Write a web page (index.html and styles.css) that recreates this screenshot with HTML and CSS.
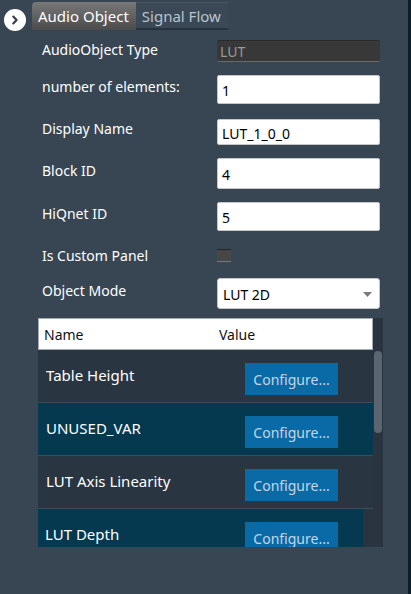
FILE: index.html
```html
<!DOCTYPE html>
<html lang="en">
<head>
    <meta charset="UTF-8">
    <meta name="viewport" content="width=device-width, initial-scale=1.0">
    <title>Audio Object Properties</title>
    <link rel="stylesheet" href="styles.css">
</head>
<body>
    <div class="panel">
        <div class="tab-bar">
            <button class="expand-btn" title="Expand">
                <svg width="22" height="22" viewBox="0 0 22 22">
                    <circle cx="11" cy="11" r="11" fill="#ffffff"/>
                    <path d="M9.3 7.6 L12.6 11 L9.3 14.4" fill="none" stroke="#3a3f45" stroke-width="2.2" stroke-linecap="round" stroke-linejoin="round"/>
                </svg>
            </button>
            <div class="tab active">Audio Object</div>
            <div class="tab">Signal Flow</div>
        </div>

        <div class="form">
            <div class="field first">
                <label>AudioObject Type</label>
                <input class="input readonly h22" type="text" value="LUT" readonly>
            </div>
            <div class="field">
                <label>number of elements:</label>
                <input class="input h29" type="text" value="1">
            </div>
            <div class="field wide-gap">
                <label>Display Name</label>
                <input class="input h26" type="text" value="LUT_1_0_0">
            </div>
            <div class="field">
                <label>Block ID</label>
                <input class="input h31" type="text" value="4">
            </div>
            <div class="field">
                <label>HiQnet ID</label>
                <input class="input h29" type="text" value="5">
            </div>
            <div class="field check-row">
                <label>Is Custom Panel</label>
                <span class="checkbox"></span>
            </div>
            <div class="field tight">
                <label>Object Mode</label>
                <div class="select">
                    <span>LUT 2D</span>
                    <svg width="9" height="5" viewBox="0 0 9 5"><path d="M0 0 H9 L4.5 5 Z" fill="#7a7a7a"/></svg>
                </div>
            </div>
        </div>

        <div class="grid">
            <div class="grid-body">
                <div class="grid-header">
                    <span class="col-name">Name</span>
                    <span class="col-value">Value</span>
                </div>
                <div class="grid-row">
                    <span class="col-name">Table Height</span>
                    <span class="col-value"><button class="configure">Configure...</button></span>
                </div>
                <div class="grid-row alt">
                    <span class="col-name">UNUSED_VAR</span>
                    <span class="col-value"><button class="configure">Configure...</button></span>
                </div>
                <div class="grid-row">
                    <span class="col-name">LUT Axis Linearity</span>
                    <span class="col-value"><button class="configure">Configure...</button></span>
                </div>
                <div class="grid-row alt last">
                    <span class="col-name">LUT Depth</span>
                    <span class="col-value"><button class="configure">Configure...</button></span>
                </div>
            </div>
            <div class="scrollbar">
                <div class="thumb"></div>
            </div>
        </div>
    </div>
</body>
</html>
```

FILE: styles.css
```css
html, body {
    margin: 0;
    height: 100%;
}
body {
    font-family: "Noto Sans", "Open Sans", sans-serif;
    font-size: 14px;
    background-color: #384654;
    color: #ffffff;
    overflow: hidden;
}
.panel {
    height: 100%;
    border-right: 3px solid #0b1e2b;
    box-sizing: border-box;
    width: 411px;
}

/* tabs */
.tab-bar {
    display: flex;
    align-items: flex-end;
    height: 30px;
    padding-top: 2px;
    box-sizing: border-box;
}
.expand-btn {
    border: none;
    background: none;
    padding: 0;
    margin: 0 6px 0 4px;
    width: 22px;
    height: 22px;
    position: relative;
    top: 1px;
    display: flex;
}
.tab {
    height: 28px;
    line-height: 27px;
    padding: 0 7px 0 6px;
    font-size: 15px;
    color: #b9c3cd;
    background-color: #3b4957;
    border-top: 1px solid #4a5866;
    border-bottom: 2px solid #263240;
    box-sizing: border-box;
}
.tab.active {
    color: #ffffff;
    background: linear-gradient(#787878, #4b4b4b);
    border-radius: 4px 0 0 0;
    border: none;
    line-height: 28px;
}

/* form */
.form {
    padding-left: 42px;
}
.field {
    display: flex;
    align-items: center;
    margin-top: 13px;
}
.field.first {
    margin-top: 10px;
}
.field.wide-gap {
    margin-top: 15px;
}
.field.tight {
    margin-top: 9px;
}
.field label {
    width: 175px;
    padding-bottom: 7px;
    font-size: 14px;
    color: #ffffff;
}
.field.first label {
    padding-bottom: 3px;
}
.input {
    width: 163px;
    box-sizing: border-box;
    border: 1px solid #c6c6c6;
    border-radius: 2px;
    background: #ffffff;
    color: #000000;
    font-family: inherit;
    font-size: 14px;
    padding: 2px 4px 0;
    margin: 0;
    outline: none;
}
.input.readonly {
    background: #383838;
    color: #9a9a9a;
    border: none;
    border-top: 1px solid #2a2a2a;
    border-bottom: 1px solid #6a6a6a;
    padding-top: 0;
    padding-left: 3px;
}
.h22 { height: 22px; }
.h26 { height: 26px; }
.h29 { height: 29px; }
.h31 { height: 31px; }

.check-row {
    height: 25px;
}
.check-row label {
    padding-bottom: 2px;
}
.checkbox {
    width: 14px;
    height: 13px;
    box-sizing: border-box;
    background: #474747;
    border-top: 1px solid #222222;
    border-bottom: 1px solid #7a7a7a;
    margin-bottom: 2px;
}
.select {
    width: 163px;
    height: 31px;
    box-sizing: border-box;
    background: #ffffff;
    border: 1px solid #c6c6c6;
    border-radius: 3px;
    color: #000000;
    display: flex;
    align-items: center;
    justify-content: space-between;
    padding: 2px 7px 0 5px;
}

/* property grid */
.grid {
    display: flex;
    margin: 9px 0 0 38px;
    width: 345px;
    height: 229px;
    background: #2a3440;
}
.grid-body {
    width: 335px;
    overflow: hidden;
}
.grid-header {
    display: flex;
    align-items: center;
    height: 32px;
    box-sizing: border-box;
    background: #ffffff;
    border: 1px solid #a3abb3;
    color: #111111;
    font-size: 14px;
}
.grid-header .col-name {
    padding-left: 5px;
    width: 175px;
}
.grid-row {
    display: flex;
    align-items: center;
    height: 52px;
    background: #2a3542;
    border-bottom: 1px solid #3f4b57;
    font-size: 15px;
    color: #ffffff;
}
.grid-row.alt {
    background: #053950;
}
.grid-row.last {
    width: 325px;
    border-bottom: none;
}
.grid-row .col-name {
    width: 207px;
    padding-left: 8px;
    padding-bottom: 2px;
    box-sizing: border-box;
}
.grid-row.last .col-name {
    padding-left: 7px;
}
.configure {
    width: 93px;
    height: 32px;
    border: none;
    background: #0a6aa6;
    color: #c4d6e6;
    font-family: inherit;
    font-size: 14px;
    padding: 0;
    margin-top: 6px;
}
.scrollbar {
    width: 10px;
    padding-top: 33px;
    display: flex;
    justify-content: center;
}
.thumb {
    width: 8px;
    height: 82px;
    border-radius: 4px;
    background: #5b6671;
}
```
